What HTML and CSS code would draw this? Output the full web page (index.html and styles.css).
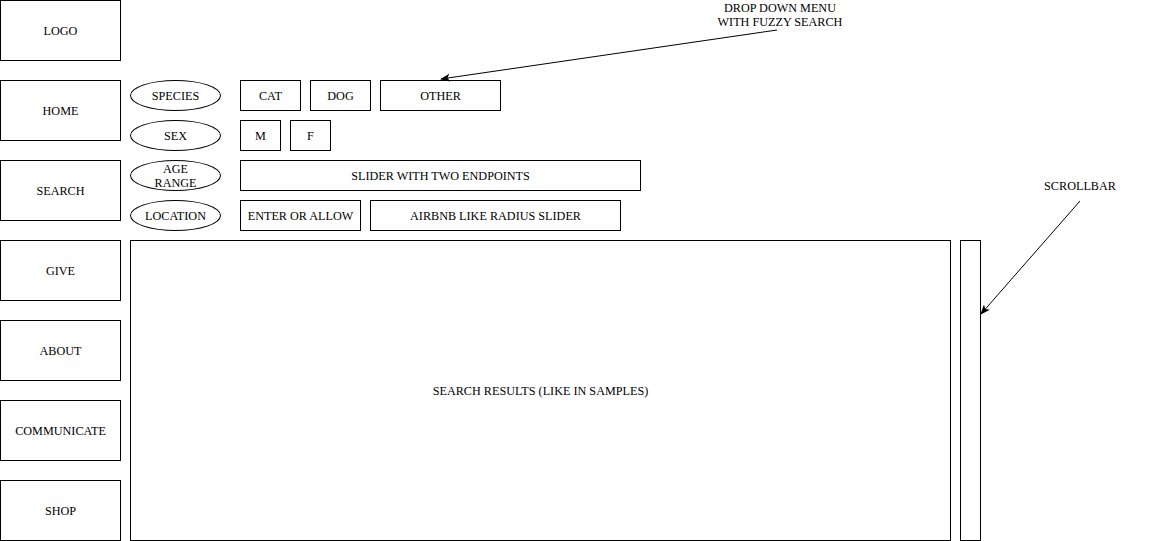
FILE: index.html
```html
<!DOCTYPE html>
<html>
<head>
<meta charset="utf-8">
<link rel="stylesheet" href="styles.css">
</head>
<body>
<div class="page">
  <nav class="nav">
    <div class="box nav-box">LOGO</div>
    <div class="box nav-box nav-spaced">HOME</div>
    <div class="box nav-box">SEARCH</div>
    <div class="box nav-box">GIVE</div>
    <div class="box nav-box">ABOUT</div>
    <div class="box nav-box">COMMUNICATE</div>
    <div class="box nav-box">SHOP</div>
  </nav>
  <main class="main">
    <div class="filters">
      <div class="filter-row">
        <div class="pill">SPECIES</div>
        <div class="options">
          <div class="box opt w61">CAT</div>
          <div class="box opt w61">DOG</div>
          <div class="box opt w121">OTHER</div>
        </div>
      </div>
      <div class="filter-row">
        <div class="pill">SEX</div>
        <div class="options">
          <div class="box opt w41">M</div>
          <div class="box opt w41">F</div>
        </div>
      </div>
      <div class="filter-row">
        <div class="pill two-line">AGE<br>RANGE</div>
        <div class="options">
          <div class="box opt w401">SLIDER WITH TWO ENDPOINTS</div>
        </div>
      </div>
      <div class="filter-row">
        <div class="pill">LOCATION</div>
        <div class="options">
          <div class="box opt w121">ENTER OR ALLOW</div>
          <div class="box opt w251">AIRBNB LIKE RADIUS SLIDER</div>
        </div>
      </div>
    </div>
    <div class="results-area">
      <div class="box results">SEARCH RESULTS (LIKE IN SAMPLES)</div>
      <div class="box scrollbar"></div>
    </div>
  </main>
</div>

<div class="note note-dropdown">DROP DOWN MENU<br>WITH FUZZY SEARCH</div>
<div class="note note-scroll">SCROLLBAR</div>

<svg class="arrows" width="1161" height="541" viewBox="0 0 1161 541">
  <defs>
    <marker id="head" markerWidth="10" markerHeight="8" refX="9" refY="4" orient="auto" markerUnits="userSpaceOnUse">
      <path d="M0,0 L10,4 L0,8 L2.5,4 Z" fill="#000"/>
    </marker>
  </defs>
  <line x1="777" y1="30" x2="441" y2="79" stroke="#000" stroke-width="1" marker-end="url(#head)"/>
  <line x1="1080" y1="201" x2="981" y2="314" stroke="#000" stroke-width="1" marker-end="url(#head)"/>
</svg>
</body>
</html>
```

FILE: styles.css
```css
* { box-sizing: border-box; }

html, body {
  margin: 0;
  padding: 0;
  background: #fff;
}

body {
  font-family: "Liberation Serif", "Times New Roman", serif;
  font-size: 12.2px;
  color: #000;
  position: relative;
  width: 1161px;
  height: 541px;
  overflow: hidden;
}

.page {
  display: flex;
  gap: 9px;
}

.box {
  border: 1px solid #000;
  display: flex;
  align-items: center;
  justify-content: center;
  text-align: center;
  background: #fff;
  padding-top: 1px;
}

.nav {
  display: flex;
  flex-direction: column;
  gap: 19px;
  width: 121px;
}

.nav-box {
  width: 121px;
  height: 61px;
}

.main {
  display: flex;
  flex-direction: column;
  gap: 9px;
  padding-top: 80px;
}

.filters {
  display: flex;
  flex-direction: column;
  gap: 9px;
}

.filter-row {
  display: flex;
  gap: 19px;
  height: 31px;
}

.pill {
  width: 91px;
  height: 31px;
  border: 1px solid #000;
  border-radius: 50%;
  display: flex;
  align-items: center;
  justify-content: center;
  text-align: center;
  padding-top: 1px;
}

.two-line {
  line-height: 14px;
  padding-top: 1px;
}

.options {
  display: flex;
  gap: 9px;
}

.opt { height: 31px; }
.w41 { width: 41px; }
.w61 { width: 61px; }
.w121 { width: 121px; }
.w251 { width: 251px; }
.w401 { width: 401px; }

.results-area {
  display: flex;
  gap: 9px;
}

.results {
  width: 821px;
  height: 301px;
}

.scrollbar {
  width: 21px;
  height: 301px;
}

.note {
  position: absolute;
  text-align: center;
  line-height: 14px;
}

.note-dropdown {
  left: 700px;
  width: 160px;
  top: 1px;
}

.note-scroll {
  left: 1030px;
  width: 100px;
  top: 179px;
}

.arrows {
  position: absolute;
  left: 0;
  top: 0;
  pointer-events: none;
}
```
